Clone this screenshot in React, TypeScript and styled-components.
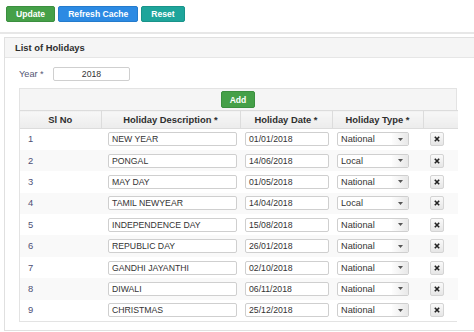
import React from "react";
import styled, { createGlobalStyle, css } from "styled-components";

const GlobalStyle = createGlobalStyle`
  html, body { margin: 0; padding: 0; background: #fff; }
  body { font-family: "Liberation Sans", Arial, sans-serif; color: #333; overflow: hidden; }
  * { box-sizing: border-box; }
`;

const Toolbar = styled.div`
  display: flex;
  gap: 3px;
  padding: 6px 0 0 6px;
  height: 34px;
  border-bottom: 2px solid #e7e7e7;
`;

const variants = {
  green: css`background: #45a048; border-color: #3b8f3f;`,
  blue: css`background: #2c8ae3; border-color: #247bcc;`,
  teal: css`background: #1ea59b; border-color: #19938a;`,
};

const ToolButton = styled.button<{ $v: keyof typeof variants }>`
  height: 16px;
  padding: 0 9px;
  border: 1px solid;
  border-radius: 2px;
  color: #fff;
  font-family: "Liberation Sans", Arial, sans-serif;
  font-weight: bold;
  font-size: 8.6px;
  line-height: 14px;
  ${(p) => variants[p.$v]}
`;

const Panel = styled.div`
  margin: 3px 0 0 4px;
  border: 1px solid #e0e0e0;
  border-right: none;
  padding-bottom: 8px;
`;

const PanelHeader = styled.div`
  height: 20px;
  background: #f5f5f5;
  border-bottom: 1px solid #e6e6e6;
  padding-left: 10px;
  font-weight: bold;
  font-size: 9.4px;
  line-height: 20px;
  color: #2e2e2e;
`;

const PanelBody = styled.div`
  padding: 8px 0 0 14px;
`;

const YearRow = styled.div`
  display: flex;
  align-items: center;
  height: 15px;
`;

const Label = styled.span`
  width: 34px;
  font-size: 9.2px;
  color: #555573;
`;

const TextBox = styled.div<{ $w: number; $center?: boolean }>`
  width: ${(p) => p.$w}px;
  height: 14px;
  border: 1px solid #cfcfcf;
  border-radius: 2px;
  background: #fff;
  font-size: 8.7px;
  line-height: 12px;
  padding: 0 3px;
  color: #333;
  text-align: ${(p) => (p.$center ? "center" : "left")};
  white-space: nowrap;
`;

const TableWrap = styled.div`
  margin-top: 7px;
  width: 438px;
  border: 1px solid #e3e3e3;
`;

const TableTop = styled.div`
  height: 21px;
  background: #f5f5f5;
  display: flex;
  justify-content: center;
  align-items: center;
`;

const AddButton = styled(ToolButton)`
  height: 17px;
  padding: 0 8px;
`;

const Table = styled.table`
  width: 100%;
  border-collapse: collapse;
  table-layout: fixed;
`;

const Th = styled.th<{ $w: number }>`
  width: ${(p) => p.$w}px;
  height: 18px;
  padding: 0;
  background: linear-gradient(#f7f7f7, #ececec);
  border-top: 1px solid #dcdcdc;
  border-bottom: 1px solid #dcdcdc;
  border-left: 1px solid #dcdcdc;
  font-size: 9.4px;
  font-weight: bold;
  color: #2e2e2e;
  &:first-child { border-left: none; }
`;

const Tr = styled.tr<{ $alt: boolean }>`
  height: 21.4px;
  background: ${(p) => (p.$alt ? "#f9f9f9" : "#fff")};
`;

const Td = styled.td<{ $pl?: number }>`
  padding: 0 0 0 ${(p) => p.$pl ?? 4}px;
  vertical-align: middle;
  line-height: 12px;
`;

const Num = styled.div`
  font-size: 9.4px;
  line-height: 12px;
  color: #4d4f75;
`;

const Select = styled.div`
  width: 72px;
  height: 14px;
  border: 1px solid #cfcfcf;
  border-radius: 2px;
  display: flex;
  background: #fff;
  overflow: hidden;
`;

const SelectText = styled.span`
  flex: 1;
  font-size: 9.2px;
  line-height: 12px;
  padding-left: 3px;
  color: #333;
`;

const SelectArrow = styled.span`
  width: 16px;
  background: linear-gradient(90deg, #fdfdfd, #e8e8e8);
  display: flex;
  align-items: center;
  justify-content: center;
`;

const DelButton = styled.div`
  width: 14px;
  height: 14px;
  margin-left: 3px;
  border: 1px solid #d4d4d4;
  border-radius: 2px;
  background: linear-gradient(#fafafa, #e6e6e6);
  display: flex;
  align-items: center;
  justify-content: center;
`;

const rows: [string, string, string][] = [
  ["NEW YEAR", "01/01/2018", "National"],
  ["PONGAL", "14/06/2018", "Local"],
  ["MAY DAY", "01/05/2018", "National"],
  ["TAMIL NEWYEAR", "14/04/2018", "Local"],
  ["INDEPENDENCE DAY", "15/08/2018", "National"],
  ["REPUBLIC DAY", "26/01/2018", "National"],
  ["GANDHI JAYANTHI", "02/10/2018", "National"],
  ["DIWALI", "06/11/2018", "National"],
  ["CHRISTMAS", "25/12/2018", "National"],
];

const Caret = () => (
  <svg width="5" height="3" viewBox="0 0 5 3">
    <path d="M0 0 L5 0 L2.5 3 Z" fill="#555" />
  </svg>
);

const Cross = () => (
  <svg width="6" height="6" viewBox="0 0 6 6">
    <path d="M0.8 0.8 L5.2 5.2 M5.2 0.8 L0.8 5.2" stroke="#222" strokeWidth="1.6" />
  </svg>
);

export default function App() {
  return (
    <>
      <GlobalStyle />
      <Toolbar>
        <ToolButton $v="green">Update</ToolButton>
        <ToolButton $v="blue">Refresh Cache</ToolButton>
        <ToolButton $v="teal">Reset</ToolButton>
      </Toolbar>
      <Panel>
        <PanelHeader>List of Holidays</PanelHeader>
        <PanelBody>
          <YearRow>
            <Label>Year *</Label>
            <TextBox $w={77} $center>
              2018
            </TextBox>
          </YearRow>
          <TableWrap>
            <TableTop>
              <AddButton $v="green">Add</AddButton>
            </TableTop>
            <Table>
              <thead>
                <tr>
                  <Th $w={81}>Sl No</Th>
                  <Th $w={139}>Holiday Description *</Th>
                  <Th $w={92}>Holiday Date *</Th>
                  <Th $w={91}>Holiday Type *</Th>
                  <Th $w={35}></Th>
                </tr>
              </thead>
              <tbody>
                {rows.map(([d, dt, t], i) => (
                  <Tr key={d} $alt={i % 2 === 1}>
                    <Td $pl={8}>
                      <Num>{i + 1}</Num>
                    </Td>
                    <Td $pl={7}>
                      <TextBox $w={129}>{d}</TextBox>
                    </Td>
                    <Td $pl={5}>
                      <TextBox $w={84}>{dt}</TextBox>
                    </Td>
                    <Td $pl={5}>
                      <Select>
                        <SelectText>{t}</SelectText>
                        <SelectArrow>
                          <Caret />
                        </SelectArrow>
                      </Select>
                    </Td>
                    <Td $pl={4}>
                      <DelButton>
                        <Cross />
                      </DelButton>
                    </Td>
                  </Tr>
                ))}
              </tbody>
            </Table>
          </TableWrap>
        </PanelBody>
      </Panel>
    </>
  );
}
